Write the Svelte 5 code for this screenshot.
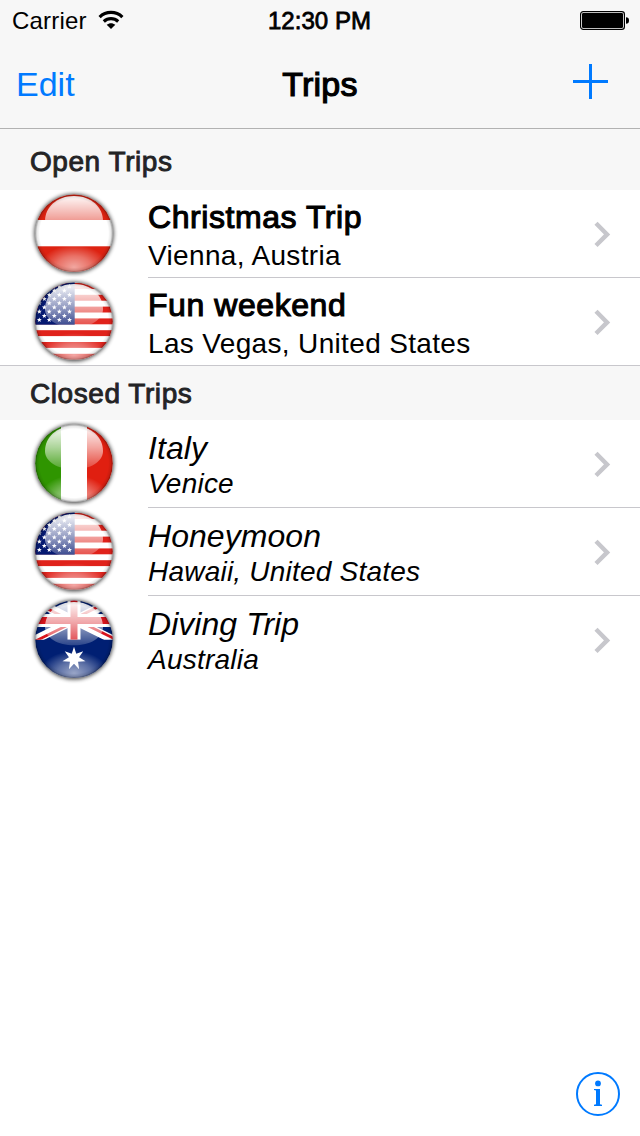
<script>
  const sections = [
    {
      title: 'Open Trips',
      kind: 'open',
      trips: [
        { name: 'Christmas Trip', place: 'Vienna, Austria', flag: 'austria' },
        { name: 'Fun weekend', place: 'Las Vegas, United States', flag: 'usa' }
      ]
    },
    {
      title: 'Closed Trips',
      kind: 'closed',
      trips: [
        { name: 'Italy', place: 'Venice', flag: 'italy' },
        { name: 'Honeymoon', place: 'Hawaii, United States', flag: 'usa' },
        { name: 'Diving Trip', place: 'Australia', flag: 'australia' }
      ]
    }
  ];

  function starPoints(cx, cy, outer, inner, count) {
    return Array.from({ length: count * 2 }, (_, i) => {
      const r = i % 2 ? inner : outer;
      const a = (Math.PI * i) / count - Math.PI / 2;
      return `${(cx + r * Math.cos(a)).toFixed(2)},${(cy + r * Math.sin(a)).toFixed(2)}`;
    }).join(' ');
  }

  const stripes = [5, 16.8, 28.6, 40.4, 52.2, 64, 75.8];
  const stars = [];
  for (let row = 0; row < 9; row++) {
    const xs = row % 2 ? [14.3, 24.3, 34.4] : [9.3, 19.2, 29.3, 39.5];
    for (const x of xs) stars.push(starPoints(x, 42 - row * 4.2, 2.6, 1.1, 5));
  }
  const commonwealthStar = starPoints(44, 62.5, 11.8, 5.2, 7);
</script>

{#snippet flagIcon(flag)}
  <svg class="flag" width="88" height="88" viewBox="0 0 88 88">
    <defs>
      <clipPath id="disc"><circle cx="44" cy="43.3" r="38.8" /></clipPath>
      <clipPath id="jack"><rect x="4" y="4" width="80" height="39.7" /></clipPath>
      <filter id="shadow" x="-20%" y="-20%" width="140%" height="140%">
        <feGaussianBlur stdDeviation="2.2" />
      </filter>
      <linearGradient id="gloss" x1="0" y1="0" x2="0" y2="1">
        <stop offset="0" stop-color="#fff" stop-opacity=".97" />
        <stop offset=".5" stop-color="#fff" stop-opacity=".6" />
        <stop offset="1" stop-color="#fff" stop-opacity=".17" />
      </linearGradient>
      <radialGradient id="glow" gradientUnits="userSpaceOnUse" cx="0" cy="0" r="1" gradientTransform="translate(44 77) scale(34 22)">
        <stop offset="0" stop-color="#fff" stop-opacity=".6" />
        <stop offset=".5" stop-color="#fff" stop-opacity=".36" />
        <stop offset="1" stop-color="#fff" stop-opacity="0" />
      </radialGradient>
      <radialGradient id="rim">
        <stop offset=".88" stop-color="#000" stop-opacity="0" />
        <stop offset=".95" stop-color="#000" stop-opacity=".1" />
        <stop offset="1" stop-color="#000" stop-opacity=".42" />
      </radialGradient>
    </defs>
    <circle cx="44" cy="43.6" r="39.6" fill="#000" opacity=".75" filter="url(#shadow)" />
    <g clip-path="url(#disc)">
      <rect width="88" height="88" fill="#fff" />
      {#if flag === 'austria'}
        <rect width="88" height="30" fill="#dd2211" />
        <rect y="56.3" width="88" height="32" fill="#dd2211" />
      {:else if flag === 'italy'}
        <rect width="31" height="88" fill="#2f9500" />
        <rect x="57" width="31" height="88" fill="#e01f10" />
      {:else if flag === 'usa'}
        {#each stripes as y}
          <rect {y} width="88" height="5.9" fill="#e0221b" />
        {/each}
        <rect width="44.7" height="46.7" fill="#061a72" />
        {#each stars as points}
          <polygon {points} fill="#fff" />
        {/each}
      {:else}
        <rect width="88" height="88" fill="#001f73" />
        <g clip-path="url(#jack)">
          <path d="M1 3L87 45.6M1 45.6L87 3" stroke="#fff" stroke-width="8.4" />
          <path d="M1 4.6L44 25.9M87 1.4L44 22.7M1 47.2L44 25.9M44 22.7L87 44" stroke="#d8141c" stroke-width="2.8" />
          <path d="M44 0V43.7M0 24.4H88" stroke="#fff" stroke-width="13" />
          <path d="M44 0V43.7M0 24.4H88" stroke="#d8141c" stroke-width="7" />
        </g>
      {/if}
      <ellipse cx="44" cy="77" rx="34" ry="22" fill="url(#glow)" />
      {#if flag === 'australia'}
        <polygon points={commonwealthStar} fill="#fff" />
      {/if}
      <path d="M15 31C15 17 27 6 44 6S73 17 73 31C73 42 60 49.3 44 49.3S15 42 15 31Z" fill="url(#gloss)" />
      <circle cx="44" cy="43.3" r="39" fill="url(#rim)" />
    </g>
  </svg>
{/snippet}

<div class="screen">
  <header>
    <div class="status">
      <div class="carrier">
        <span>Carrier</span>
        <svg width="26" height="20" viewBox="0 0 26 20">
          <g fill="none" stroke="#000" stroke-width="3.2">
            <path d="M1.6 7.1C8 .9 18 .9 24.4 7.1" />
            <path d="M5.8 11.5C10 7.7 16 7.7 20.2 11.5" />
          </g>
          <path d="M13 19L8.7 14.8C11.3 12.7 14.7 12.7 17.3 14.8Z" />
        </svg>
      </div>
      <span class="clock">12:30 PM</span>
      <svg class="battery" width="50" height="20" viewBox="0 0 50 20">
        <rect x=".6" y=".6" width="43.8" height="17.8" rx="2.6" fill="#fff" stroke="#000" stroke-width="1.2" />
        <rect x="2" y="2" width="41" height="15" rx="1.2" />
        <path d="M46 6.2C48 6.2 49 7.3 49 9.5S48 12.8 46 12.8Z" />
      </svg>
    </div>
    <nav>
      <span class="edit">Edit</span>
      <h1>Trips</h1>
      <svg class="add" width="35" height="35" viewBox="0 0 35 35">
        <path d="M0 17.5H35M17.5 0V35" stroke="#007aff" stroke-width="3" />
      </svg>
    </nav>
  </header>

  <main>
    {#each sections as section}
      <section class={section.kind}>
        <h2>{section.title}</h2>
        {#each section.trips as trip}
          <div class="row">
            {@render flagIcon(trip.flag)}
            <div class="cell">
              <div class="text">
                <div class="name">{trip.name}</div>
                <div class="place">{trip.place}</div>
              </div>
              <svg class="chevron" width="18" height="28" viewBox="0 0 18 28">
                <path d="M3 3.3L14.1 14.4L3 25.5" fill="none" stroke="#c7c7cc" stroke-width="4.4" />
              </svg>
            </div>
          </div>
        {/each}
      </section>
    {/each}
  </main>

  <footer>
    <svg width="44" height="44" viewBox="0 0 44 44">
      <circle cx="22" cy="22" r="21" fill="none" stroke="#007aff" stroke-width="2" />
      <circle cx="22" cy="11.4" r="2.9" fill="#007aff" />
      <path d="M18 17H24V32.2L26 32.8V34H18V32.8L20 32.2V18.6L18 18.1Z" fill="#007aff" />
    </svg>
  </footer>
</div>

<style>
  :global(body) {
    margin: 0;
    background: #fff;
  }
  .screen {
    display: flex;
    flex-direction: column;
    width: 640px;
    height: 1136px;
    overflow: hidden;
    background: #fff;
    color: #000;
    font-family: 'Liberation Sans', Arial, sans-serif;
  }
  svg {
    display: block;
    flex: none;
  }
  h1,
  h2 {
    margin: 0;
    font-weight: 400;
  }
  header {
    box-sizing: border-box;
    height: 129px;
    background: #f7f7f7;
    border-bottom: 1px solid #b2b2b2;
  }
  .status {
    display: grid;
    grid-template-columns: 1fr auto 1fr;
    height: 40px;
    padding: 0 10px 0 12px;
    align-items: center;
    font-size: 24px;
    line-height: 40px;
  }
  .carrier {
    display: flex;
    align-items: center;
    gap: 11px;
    letter-spacing: 0.2px;
  }
  .carrier span,
  .clock {
    padding-top: 2px;
    line-height: 38px;
  }
  .clock {
    padding-right: 3px;
    -webkit-text-stroke: 0.8px #000;
    letter-spacing: 0.05px;
  }
  .battery {
    justify-self: end;
    margin-top: 2px;
  }
  nav {
    display: grid;
    grid-template-columns: 1fr auto 1fr;
    height: 88px;
    padding: 0 32px 0 16px;
    align-items: center;
    font-size: 34px;
    line-height: 88px;
  }
  .edit {
    color: #007aff;
  }
  h1 {
    padding-left: 16px;
    font-size: 34px;
    letter-spacing: 0.2px;
    -webkit-text-stroke: 1.2px #000;
  }
  .add {
    justify-self: end;
    margin-bottom: 5px;
  }
  h2 {
    box-sizing: border-box;
    padding-left: 30px;
    background: #f7f7f7;
    color: #232325;
    font-size: 28px;
    letter-spacing: 0.56px;
    -webkit-text-stroke: 0.9px #232325;
  }
  .open h2 {
    height: 61px;
    line-height: 65px;
  }
  .closed h2 {
    height: 54px;
    line-height: 55px;
  }
  .row {
    display: flex;
    height: 88px;
    padding-left: 30px;
    gap: 30px;
  }
  .cell {
    box-sizing: border-box;
    display: flex;
    flex: 1;
    justify-content: space-between;
    border-bottom: 1px solid #c8c7cc;
    padding-right: 29px;
  }
  .open .row:last-child {
    box-shadow: inset 0 -1px #c8c7cc;
  }
  .closed .row:last-child .cell {
    border-bottom: 0;
  }
  .text {
    padding-top: 8px;
    white-space: nowrap;
  }
  .name {
    font-size: 32px;
    line-height: 38px;
  }
  .place {
    font-size: 28px;
    line-height: 40px;
    letter-spacing: 0.34px;
  }
  .open .name {
    letter-spacing: 0.56px;
    -webkit-text-stroke: 1.1px #000;
  }
  .closed .text {
    padding-top: 9px;
    font-style: italic;
  }
  .closed .name {
    letter-spacing: 0.05px;
  }
  .closed .place {
    line-height: 33px;
    letter-spacing: 0.22px;
  }
  .chevron {
    margin-top: 30px;
  }
  footer {
    display: flex;
    justify-content: flex-end;
    margin-top: auto;
    padding: 0 20px 20px;
  }
</style>
